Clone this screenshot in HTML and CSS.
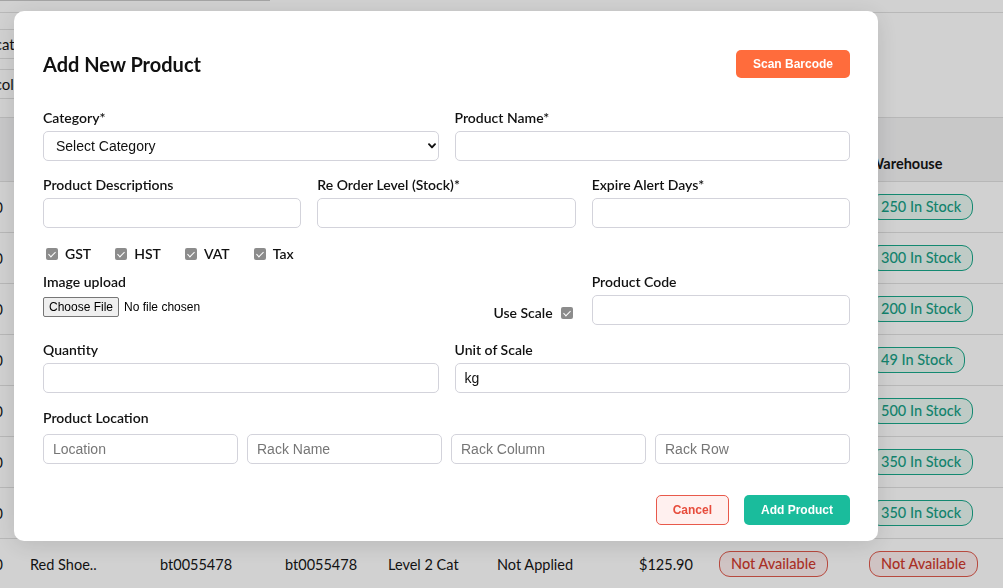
FILE: index.html
```html
<!DOCTYPE html>
<html lang="en">
<head>
<meta charset="utf-8">
<title>Products - Add New Product</title>
<link rel="stylesheet" href="styles.css">
</head>
<body>
<div class="page">
  <div class="topbar"><div class="search"></div></div>
  <div class="filters">
    <div class="filter-list">
      <div class="filter-item">Subcategory</div>
      <div class="filter-item">Subcolor</div>
    </div>
  </div>
  <div class="table">
    <div class="tr th">
      <div class="td num"></div><div class="td">Product</div><div class="td">SKU</div><div class="td">Barcode</div><div class="td">Category</div><div class="td">Tax</div><div class="td">Price</div><div class="td">Stock</div><div class="td">Warehouse</div>
    </div>
    <div class="tr">
      <div class="td num">10</div><div class="td">Blue Shirt..</div><div class="td">bt0055471</div><div class="td">bt0055471</div><div class="td">Level 1 Cat</div><div class="td">Applied</div><div class="td">$45.00</div><div class="td"><span class="badge in">250 In Stock</span></div><div class="td"><span class="badge in">250 In Stock</span></div>
    </div>
    <div class="tr">
      <div class="td num">20</div><div class="td">Green Hat..</div><div class="td">bt0055472</div><div class="td">bt0055472</div><div class="td">Level 1 Cat</div><div class="td">Applied</div><div class="td">$19.90</div><div class="td"><span class="badge in">300 In Stock</span></div><div class="td"><span class="badge in">300 In Stock</span></div>
    </div>
    <div class="tr">
      <div class="td num">30</div><div class="td">Black Belt..</div><div class="td">bt0055473</div><div class="td">bt0055473</div><div class="td">Level 2 Cat</div><div class="td">Applied</div><div class="td">$25.00</div><div class="td"><span class="badge in">200 In Stock</span></div><div class="td"><span class="badge in">200 In Stock</span></div>
    </div>
    <div class="tr">
      <div class="td num">40</div><div class="td">White Socks..</div><div class="td">bt0055474</div><div class="td">bt0055474</div><div class="td">Level 2 Cat</div><div class="td">Not Applied</div><div class="td">$9.50</div><div class="td"><span class="badge in">49 In Stock</span></div><div class="td"><span class="badge in">49 In Stock</span></div>
    </div>
    <div class="tr">
      <div class="td num">50</div><div class="td">Grey Jacket..</div><div class="td">bt0055475</div><div class="td">bt0055475</div><div class="td">Level 1 Cat</div><div class="td">Applied</div><div class="td">$89.00</div><div class="td"><span class="badge in">500 In Stock</span></div><div class="td"><span class="badge in">500 In Stock</span></div>
    </div>
    <div class="tr">
      <div class="td num">60</div><div class="td">Brown Bag..</div><div class="td">bt0055476</div><div class="td">bt0055476</div><div class="td">Level 3 Cat</div><div class="td">Applied</div><div class="td">$64.00</div><div class="td"><span class="badge in">350 In Stock</span></div><div class="td"><span class="badge in">350 In Stock</span></div>
    </div>
    <div class="tr">
      <div class="td num">70</div><div class="td">Navy Cap..</div><div class="td">bt0055477</div><div class="td">bt0055477</div><div class="td">Level 3 Cat</div><div class="td">Applied</div><div class="td">$15.00</div><div class="td"><span class="badge in">350 In Stock</span></div><div class="td"><span class="badge in">350 In Stock</span></div>
    </div>
    <div class="tr">
      <div class="td num">80</div><div class="td">Red Shoe..</div><div class="td">bt0055478</div><div class="td">bt0055478</div><div class="td">Level 2 Cat</div><div class="td">Not Applied</div><div class="td">$125.90</div><div class="td"><span class="badge out">Not Available</span></div><div class="td"><span class="badge out">Not Available</span></div>
    </div>
  </div>
</div>

<div class="overlay"></div>

<div class="modal">
  <div class="modal-header">
    <h2 class="modal-title">Add New Product</h2>
    <button class="btn btn-scan" type="button">Scan Barcode</button>
  </div>

  <form class="form">
    <div class="row grid2">
      <div class="field">
        <label class="label">Category*</label>
        <div class="select-wrap">
          <select class="control select">
            <option>Select Category</option>
          </select>
          <svg class="chev" width="8" height="6" viewBox="0 0 8 6"><path d="M1 1.2 L4 4.4 L7 1.2" fill="none" stroke="#111" stroke-width="1.9" stroke-linecap="round" stroke-linejoin="round"/></svg>
        </div>
      </div>
      <div class="field">
        <label class="label">Product Name*</label>
        <input class="control" type="text">
      </div>
    </div>

    <div class="row grid3">
      <div class="field">
        <label class="label">Product Descriptions</label>
        <input class="control" type="text">
      </div>
      <div class="field">
        <label class="label">Re Order Level (Stock)*</label>
        <input class="control" type="text">
      </div>
      <div class="field">
        <label class="label">Expire Alert Days*</label>
        <input class="control" type="text">
      </div>
    </div>

    <div class="checks">
      <label class="check"><input class="cb" type="checkbox" checked disabled>GST</label>
      <label class="check"><input class="cb" type="checkbox" checked disabled>HST</label>
      <label class="check"><input class="cb" type="checkbox" checked disabled>VAT</label>
      <label class="check"><input class="cb" type="checkbox" checked disabled>Tax</label>
    </div>

    <div class="row-tight grid3">
      <div class="field">
        <label class="label">Image upload</label>
        <input class="file" type="file">
      </div>
      <div class="scale-cell">
        <label class="scale">Use Scale<input class="cb" type="checkbox" checked disabled></label>
      </div>
      <div class="field">
        <label class="label">Product Code</label>
        <input class="control" type="text">
      </div>
    </div>

    <div class="row-mid grid2">
      <div class="field">
        <label class="label">Quantity</label>
        <input class="control" type="text">
      </div>
      <div class="field">
        <label class="label">Unit of Scale</label>
        <input class="control" type="text" value="kg">
      </div>
    </div>

    <div class="row-mid">
      <label class="label label-loc">Product Location</label>
      <div class="grid4">
        <input class="control" type="text" placeholder="Location">
        <input class="control" type="text" placeholder="Rack Name">
        <input class="control" type="text" placeholder="Rack Column">
        <input class="control" type="text" placeholder="Rack Row">
      </div>
    </div>

    <div class="footer">
      <button class="btn btn-cancel" type="button">Cancel</button>
      <button class="btn btn-add" type="button">Add Product</button>
    </div>
  </form>
</div>
</body>
</html>
```

FILE: styles.css
```css
* { box-sizing: border-box; }

html, body {
  margin: 0;
  padding: 0;
}

body {
  width: 1003px;
  height: 588px;
  overflow: hidden;
  background: #ffffff;
  font-family: Lato, "Noto Sans", sans-serif;
  font-size: 14px;
  color: #161616;
}

/* ---------- background page ---------- */
.topbar {
  height: 13px;
  border-bottom: 1px solid #e1e1e1;
}

.search {
  width: 270px;
  height: 1px;
  background: #c9c9c9;
}

.filters {
  height: 104px;
  padding-top: 16px;
}

.filter-list {
  margin-left: -40px;
  width: 220px;
}

.filter-item {
  height: 30px;
  margin-bottom: 10px;
  padding-left: 10px;
  border-top: 1px solid #e0e0e0;
  border-bottom: 1px solid #e0e0e0;
  line-height: 28px;
  font-size: 15px;
}

.table {
  border-top: 1px solid #e0e0e0;
}

.tr {
  display: grid;
  grid-template-columns: 30px 130px 125px 103px 109px 142px 80px 150px 1fr;
  align-items: center;
  height: 51px;
  border-bottom: 1px solid #e0e0e0;
  font-size: 14.5px;
}

.tr.th {
  height: 64px;
  align-items: end;
  padding-bottom: 9px;
  background: #f4f4f5;
  font-weight: 700;
}

.td {
  white-space: nowrap;
}

.td.num {
  display: flex;
  justify-content: flex-end;
  padding-right: 27px;
}

.badge {
  display: inline-block;
  padding: 3px 11px;
  border: 1px solid;
  border-radius: 11px;
  line-height: 18px;
  font-size: 14.5px;
  font-weight: 500;
}

.badge.in {
  color: #17a085;
  border-color: #18a88a;
  background: #e9f8f2;
}

.badge.out {
  color: #cf3b2e;
  border-color: #e0594c;
  background: #fdeeee;
}

/* ---------- overlay & modal ---------- */
.overlay {
  position: fixed;
  inset: 0;
  background: rgba(0, 0, 0, 0.18);
}

.modal {
  position: fixed;
  top: 11px;
  left: 14px;
  width: 864px;
  padding: 39px 28px 16px 29px;
  background: #ffffff;
  border-radius: 10px;
  box-shadow: 0 4px 24px rgba(0, 0, 0, 0.12);
  color: #161616;
}

.modal-header {
  display: flex;
  justify-content: space-between;
  align-items: center;
  height: 28px;
}

.modal-title {
  margin: 0;
  font-size: 20px;
  font-weight: 700;
  color: #111;
}

.btn {
  font-family: "Liberation Sans", Arial, sans-serif;
  font-weight: 700;
  font-size: 12px;
  border-radius: 5px;
  border: 1px solid transparent;
  padding: 0 16px;
  cursor: pointer;
}

.btn-scan {
  height: 28px;
  background: #ff6c3c;
  color: #ffffff;
}

.form {
  margin: 30px 0 0;
}

.grid2 {
  display: grid;
  grid-template-columns: 1fr 1fr;
  column-gap: 16px;
}

.grid3 {
  display: grid;
  grid-template-columns: 1fr 1fr 1fr;
  column-gap: 16px;
}

.grid4 {
  display: grid;
  grid-template-columns: repeat(4, 1fr);
  column-gap: 9px;
}

.row + .row { margin-top: 14px; }
.row-tight { margin-top: 8px; }
.row-mid { margin-top: 15px; }

.label {
  display: block;
  font-size: 14px;
  font-weight: 600;
  line-height: 20px;
  margin-bottom: 3px;
  color: #111;
}

.label-loc {
  margin-bottom: 6px;
}

.control {
  display: block;
  width: 100%;
  height: 30px;
  margin: 0;
  padding: 0 9px;
  border: 1px solid #d3d3db;
  border-radius: 5px;
  background: #ffffff;
  font-family: "Liberation Sans", Arial, sans-serif;
  font-size: 14px;
  color: #111;
  outline: none;
}

.control::placeholder {
  color: #767676;
}

.select-wrap {
  position: relative;
}

.select {
  appearance: none;
  -webkit-appearance: none;
  padding-left: 12px;
}

.chev {
  position: absolute;
  right: 3px;
  top: 12px;
  pointer-events: none;
}

.checks {
  display: flex;
  gap: 24px;
  height: 20px;
  margin-top: 16px;
  padding-left: 3px;
  align-items: center;
}

.check {
  display: flex;
  align-items: center;
  font-size: 14px;
  font-weight: 600;
  line-height: 20px;
  color: #111;
}

.cb {
  appearance: none;
  -webkit-appearance: none;
  position: relative;
  width: 12px;
  height: 12px;
  margin: 0 7px 0 0;
  border-radius: 2px;
  background: #8c8c8c;
  flex: none;
}

.cb::after {
  content: "";
  position: absolute;
  left: 4px;
  top: 1.5px;
  width: 3px;
  height: 6px;
  border: solid #ffffff;
  border-width: 0 1.6px 1.6px 0;
  transform: rotate(45deg);
}

.file {
  display: block;
  margin-top: 5px;
  font-family: "Liberation Sans", Arial, sans-serif;
  font-size: 12px;
  color: #000;
}

.file::file-selector-button {
  font-family: "Liberation Sans", Arial, sans-serif;
  font-size: 12px;
  padding: 2px 5px;
  margin-right: 5px;
  border: 1px solid #767676;
  border-radius: 2px;
  background: #efefef;
  color: #000;
}

.scale-cell {
  display: flex;
  justify-content: flex-end;
  align-items: flex-end;
  padding: 0 3px 2px 0;
}

.scale {
  display: flex;
  align-items: center;
  font-size: 14px;
  font-weight: 600;
  line-height: 20px;
  color: #111;
}

.scale .cb {
  margin: 0 0 0 8px;
}

.footer {
  display: flex;
  justify-content: flex-end;
  gap: 15px;
  margin-top: 31px;
}

.btn-cancel {
  height: 30px;
  background: #fff0ef;
  border-color: #e8594b;
  color: #e74c3c;
}

.btn-add {
  height: 30px;
  background: #1abc9c;
  color: #ffffff;
}
```
